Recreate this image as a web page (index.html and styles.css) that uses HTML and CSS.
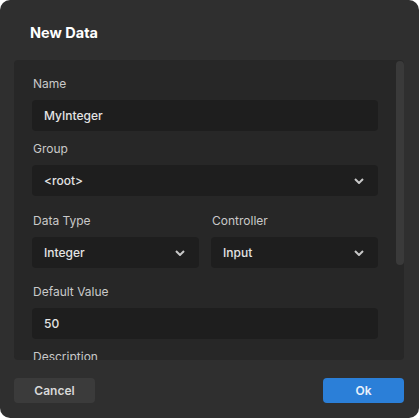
FILE: index.html
```html
<!DOCTYPE html>
<html lang="en">

<head>
  <meta charset="UTF-8">
  <meta name="viewport" content="width=device-width, initial-scale=1.0">
  <title>New Data</title>
  <link rel="stylesheet" href="styles.css">
</head>

<body>
  <div class="dialog">
    <div class="dialog-header">
      <h3>New Data</h3>
    </div>

    <div class="dialog-body">
      <div class="scroll-area">
        <div class="field">
          <label>Name</label>
          <div class="input">MyInteger</div>
        </div>

        <div class="field wide">
          <label>Group</label>
          <div class="input select">
            <span>&lt;root&gt;</span>
            <svg width="10" height="6" viewBox="0 0 10 6"><polyline points="1,1 5,5 9,1" /></svg>
          </div>
        </div>

        <div class="row">
          <div class="field wide">
            <label>Data Type</label>
            <div class="input select">
              <span>Integer</span>
              <svg width="10" height="6" viewBox="0 0 10 6"><polyline points="1,1 5,5 9,1" /></svg>
            </div>
          </div>
          <div class="field wide">
            <label>Controller</label>
            <div class="input select">
              <span>Input</span>
              <svg width="10" height="6" viewBox="0 0 10 6"><polyline points="1,1 5,5 9,1" /></svg>
            </div>
          </div>
        </div>

        <div class="field">
          <label>Default Value</label>
          <div class="input">50</div>
        </div>

        <div class="field">
          <label>Description</label>
          <div class="input textarea"></div>
        </div>
      </div>

      <div class="scrollbar">
        <div class="scrollbar-thumb"></div>
      </div>
    </div>

    <div class="dialog-footer">
      <button type="button" class="btn">Cancel</button>
      <button type="button" class="btn primary">Ok</button>
    </div>
  </div>
</body>

</html>
```

FILE: styles.css
```css
body {
  margin: 0;
  background-color: #ffffff;
  font-family: Inter, "Noto Sans", sans-serif;
}

.dialog {
  width: 419px;
  height: 418px;
  background: #2f2f2f;
  border-radius: 10px;
  display: flex;
  flex-direction: column;
}

.dialog-header {
  height: 60px;
  box-sizing: border-box;
  padding: 23px 30px 0;
}

.dialog-header h3 {
  margin: 0;
  font-size: 14.5px;
  line-height: 20px;
  font-weight: 700;
  color: #ffffff;
}

.dialog-body {
  height: 300px;
  margin: 0 15px 0 14px;
  background: #272727;
  border-radius: 4px;
  overflow: hidden;
  display: flex;
}

.scroll-area {
  flex: 1;
  padding: 16px 18px 0;
}

.scrollbar {
  width: 8px;
  padding-top: 1px;
}

.scrollbar-thumb {
  height: 204px;
  background: #3a3a3a;
  border-radius: 4px;
}

.field {
  margin-bottom: 10px;
}

.field.wide {
  margin-bottom: 17px;
}

.row {
  display: flex;
  gap: 12px;
}

.row .field {
  flex: 1;
  margin-bottom: 16px;
}

.field label {
  display: block;
  font-size: 12px;
  line-height: 16px;
  color: #c9c9c9;
  margin: 0 0 8px 1px;
}

.input {
  height: 31px;
  box-sizing: border-box;
  padding: 0 12px;
  background: #1e1e1e;
  border-radius: 4px;
  font-size: 12px;
  font-weight: 500;
  color: #e4e4e4;
  display: flex;
  align-items: center;
}

.select {
  justify-content: space-between;
  padding-right: 14px;
}

.select polyline {
  fill: none;
  stroke: #c8c8c8;
  stroke-width: 2;
}

.textarea {
  height: 100px;
}

.dialog-footer {
  display: flex;
  justify-content: space-between;
  padding: 18px 15px 0 14px;
}

.btn {
  width: 81px;
  height: 25px;
  border: none;
  border-radius: 4px;
  background: #3b3b3b;
  color: #d8d8d8;
  font-family: Inter, "Noto Sans", sans-serif;
  font-size: 12px;
  font-weight: 600;
  cursor: pointer;
}

.btn.primary {
  background: #2b7fd8;
  color: #e8f1fb;
}
```
